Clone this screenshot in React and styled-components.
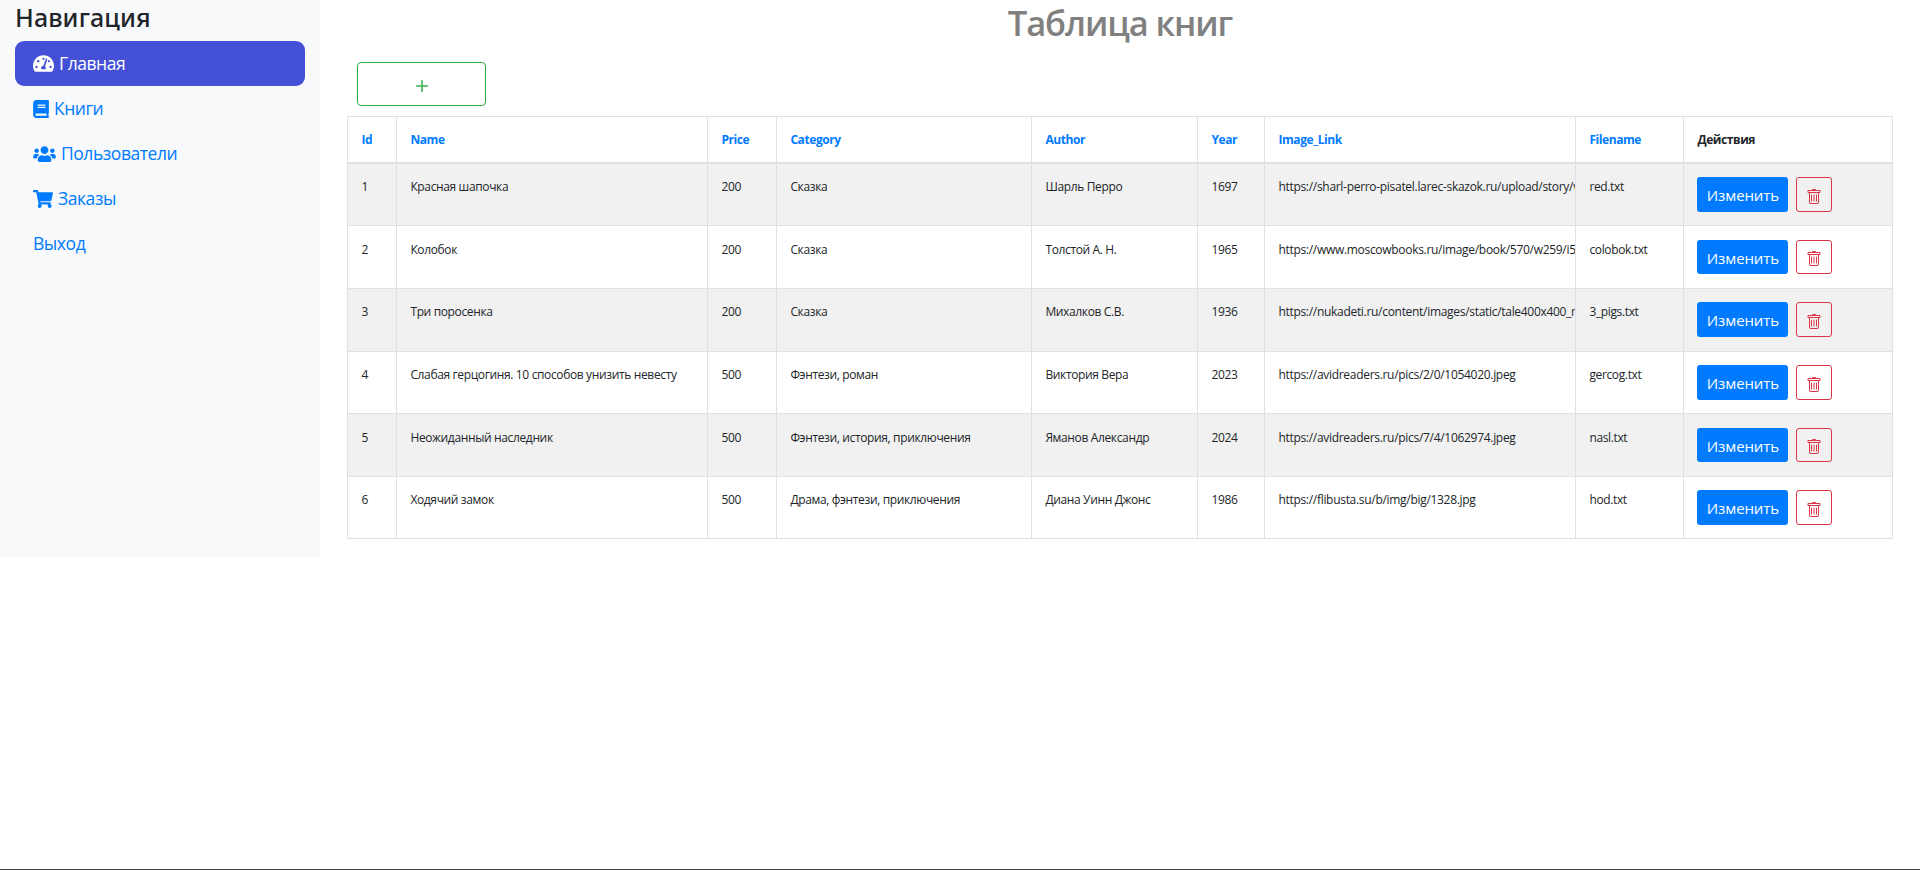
import React from "react";
import styled, { createGlobalStyle } from "styled-components";
import { FaTachometerAlt, FaBook, FaUsers, FaShoppingCart } from "react-icons/fa";
import { BsPlusLg, BsTrash } from "react-icons/bs";

const GlobalStyle = createGlobalStyle`
  *, *::before, *::after { box-sizing: border-box; }
  body {
    margin: 0;
    background: #fff;
    color: #212529;
    font-family: "Segoe UI", "Open Sans", "Noto Sans", sans-serif;
    font-size: 16px;
    line-height: 1.5;
  }
`;

const Page = styled.div`
  display: flex;
  align-items: flex-start;
  height: 870px;
  border-bottom: 1px solid #45454f;
`;

const Sidebar = styled.aside`
  flex: 0 0 320px;
  height: 557px;
  padding: 0 15px;
  background: #f8f9fa;
`;

const SidebarTitle = styled.h4`
  margin: 0;
  height: 41px;
  font-family: "Segoe UI", "Noto Sans", sans-serif;
  font-size: 25px;
  font-weight: 500;
  letter-spacing: 0.1px;
  line-height: 34px;
`;

const NavItem = styled.a`
  display: flex;
  align-items: center;
  gap: 5px;
  height: 45px;
  padding: 0 18px;
  border-radius: 9px;
  font-size: 17.5px;
  letter-spacing: -0.45px;
  color: ${(p) => (p.$active ? "#fff" : "#007bff")};
  background: ${(p) => (p.$active ? "#4451d7" : "transparent")};
  text-decoration: none;
`;

const NavIcon = styled.span`
  display: flex;
  svg {
    display: block;
    width: ${(p) => p.$w}px;
    height: ${(p) => p.$h}px;
  }
`;

const Main = styled.main`
  flex: 1;
  padding: 0 27px;
`;

const Title = styled.h2`
  margin: 0;
  height: 62px;
  font-size: 34.5px;
  font-weight: 600;
  letter-spacing: -1.1px;
  line-height: 46px;
  text-align: center;
  color: gray;
`;

const AddButton = styled.button`
  display: flex;
  align-items: center;
  justify-content: center;
  width: 129px;
  height: 44px;
  margin: 0 0 10px 10px;
  padding: 3px 0 0 1px;
  border: 1px solid #28a745;
  border-radius: 4px;
  background: transparent;
  color: #28a745;
  svg { stroke: currentColor; stroke-width: 0.4px; }
`;

const Table = styled.table`
  table-layout: fixed;
  width: 1546px;
  border-collapse: separate;
  border-spacing: 0;
  border: solid #dee2e6;
  border-width: 1px 0 0 1px;
  font-size: 12px;
  letter-spacing: -0.36px;
`;

const Col = styled.col`
  width: ${(p) => p.$w}px;
`;

const HeadCell = styled.th`
  height: 47px;
  padding: 1px 13.4px 0;
  border: solid #dee2e6;
  border-width: 0 1px 2px 0;
  text-align: left;
  font-weight: 700;
  letter-spacing: -0.42px;
  color: ${(p) => (p.$link ? "#007bff" : "#212529")};
`;

const Cell = styled.td`
  padding: 13px 13.4px 0;
  border: solid #dee2e6;
  border-width: 0 1px 1px 0;
  vertical-align: top;
  line-height: 20px;
  white-space: nowrap;
`;

const LinkCell = styled(Cell)`
  padding-right: 0;
  overflow: hidden;
  letter-spacing: -0.3px;
`;

const Actions = styled.div`
  display: flex;
  gap: 8px;
  height: 35px;
`;

const EditButton = styled.button`
  width: 91px;
  padding: 1px 0 0;
  border: 0;
  border-radius: 3px;
  background: #007bff;
  color: #fff;
  font: inherit;
  font-size: 15px;
  letter-spacing: -0.1px;
`;

const DeleteButton = styled.button`
  display: flex;
  align-items: center;
  justify-content: center;
  width: 36px;
  padding: 4px 0 0;
  border: 1px solid #dc3545;
  border-radius: 3px;
  background: transparent;
  color: #dc3545;
`;

const Row = styled.tr`
  height: ${(p) => (p.$tall ? 63 : 62)}px;
  background: ${(p) => (p.$striped ? "#f1f1f1" : "#fff")};
  ${Cell} { padding-top: ${(p) => (p.$low ? 14 : 13)}px; }
  ${Actions} { height: ${(p) => (p.$low ? 34 : 35)}px; }
`;

const widths = [49, 311, 69, 255, 166, 67, 311, 108, 209];
const heads = ["Id", "Name", "Price", "Category", "Author", "Year", "Image_Link", "Filename"];
const tallRows = [1, 2, 4];
const lowRows = [1, 4];
const books = [
  ["Красная шапочка", 200, "Сказка", "Шарль Перро", 1697, "https://sharl-perro-pisatel.larec-skazok.ru/upload/story/v", "red.txt"],
  ["Колобок", 200, "Сказка", "Толстой А. Н.", 1965, "https://www.moscowbooks.ru/image/book/570/w259/i5", "colobok.txt"],
  ["Три поросенка", 200, "Сказка", "Михалков С.В.", 1936, "https://nukadeti.ru/content/images/static/tale400x400_r", "3_pigs.txt"],
  ["Слабая герцогиня. 10 способов унизить невесту", 500, "Фэнтези, роман", "Виктория Вера", 2023, "https://avidreaders.ru/pics/2/0/1054020.jpeg", "gercog.txt"],
  ["Неожиданный наследник", 500, "Фэнтези, история, приключения", "Яманов Александр", 2024, "https://avidreaders.ru/pics/7/4/1062974.jpeg", "nasl.txt"],
  ["Ходячий замок", 500, "Драма, фэнтези, приключения", "Диана Уинн Джонс", 1986, "https://flibusta.su/b/img/big/1328.jpg", "hod.txt"],
];

export default function App() {
  return (
    <Page>
      <GlobalStyle />
      <Sidebar>
        <SidebarTitle>Навигация</SidebarTitle>
        <nav>
          <NavItem $active><NavIcon $w={21} $h={19}><FaTachometerAlt /></NavIcon>Главная</NavItem>
          <NavItem><NavIcon $w={16} $h={18}><FaBook /></NavIcon>Книги</NavItem>
          <NavItem><NavIcon $w={23} $h={18}><FaUsers /></NavIcon>Пользователи</NavItem>
          <NavItem><NavIcon $w={20} $h={18}><FaShoppingCart /></NavIcon>Заказы</NavItem>
          <NavItem>Выход</NavItem>
        </nav>
      </Sidebar>
      <Main>
        <Title>Таблица книг</Title>
        <AddButton><BsPlusLg size={16} /></AddButton>
        <Table>
          <colgroup>{widths.map((w, i) => <Col key={i} $w={w} />)}</colgroup>
          <thead>
            <tr>
              {heads.map((h) => <HeadCell key={h} $link>{h}</HeadCell>)}
              <HeadCell>Действия</HeadCell>
            </tr>
          </thead>
          <tbody>
            {books.map(([name, price, category, author, year, link, file], i) => (
              <Row key={name} $tall={tallRows.includes(i)} $low={lowRows.includes(i)} $striped={i % 2 === 0}>
                <Cell>{i + 1}</Cell>
                <Cell>{name}</Cell>
                <Cell>{price}</Cell>
                <Cell>{category}</Cell>
                <Cell>{author}</Cell>
                <Cell>{year}</Cell>
                <LinkCell>{link}</LinkCell>
                <Cell>{file}</Cell>
                <Cell>
                  <Actions>
                    <EditButton>Изменить</EditButton>
                    <DeleteButton><BsTrash size={16} /></DeleteButton>
                  </Actions>
                </Cell>
              </Row>
            ))}
          </tbody>
        </Table>
      </Main>
    </Page>
  );
}
